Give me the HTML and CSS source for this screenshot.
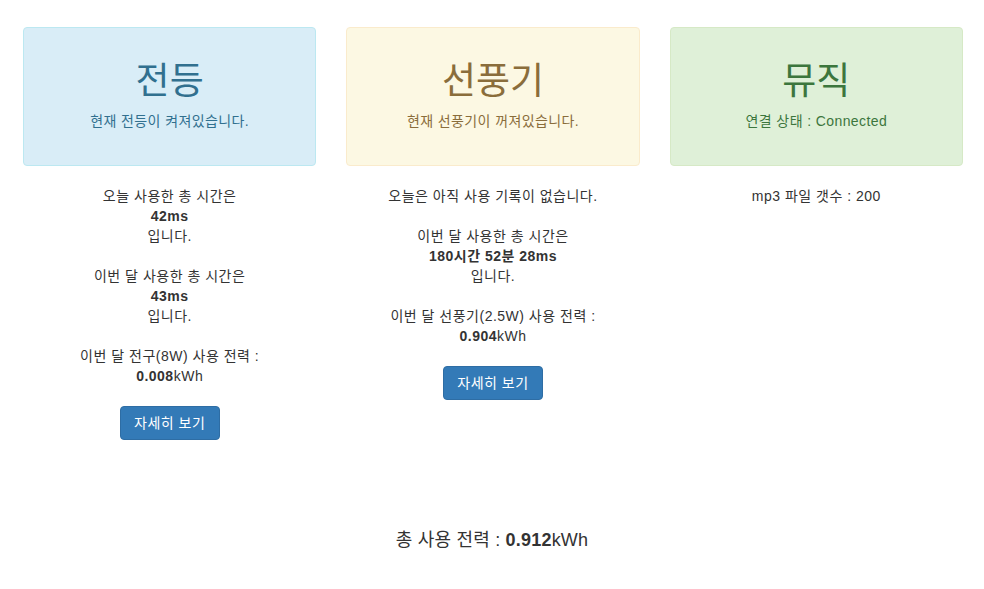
FILE: index.html
```html
<!DOCTYPE html>
<html lang="ko">
<head>
<meta charset="utf-8">
<title>Home</title>
<link rel="stylesheet" href="styles.css">
</head>
<body>
<div class="grid">
  <div class="col">
    <div class="alert alert-info">
      <h1 class="title">전등</h1>
      <p class="sub">현재 전등이 켜져있습니다.</p>
    </div>
    <div class="info">
      오늘 사용한 총 시간은<br><b>42ms</b><br>입니다.<br><br>
      이번 달 사용한 총 시간은<br><b>43ms</b><br>입니다.<br><br>
      이번 달 전구(8W) 사용 전력 :<br><b>0.008</b>kWh
    </div>
    <button class="btn">자세히 보기</button>
  </div>
  <div class="col">
    <div class="alert alert-warning">
      <h1 class="title">선풍기</h1>
      <p class="sub">현재 선풍기이 꺼져있습니다.</p>
    </div>
    <div class="info">
      오늘은 아직 사용 기록이 없습니다.<br><br>
      이번 달 사용한 총 시간은<br><b>180시간 52분 28ms</b><br>입니다.<br><br>
      이번 달 선풍기(2.5W) 사용 전력 :<br><b>0.904</b>kWh
    </div>
    <button class="btn">자세히 보기</button>
  </div>
  <div class="col">
    <div class="alert alert-success">
      <h1 class="title">뮤직</h1>
      <p class="sub">연결 상태 : Connected</p>
    </div>
    <div class="info">mp3 파일 갯수 : 200</div>
  </div>
</div>
<div class="total">총 사용 전력 : <b>0.912</b>kWh</div>
</body>
</html>
```
FILE: styles.css
```css
html, body {
  margin: 0;
  padding: 0;
  background: #fff;
}
body {
  font-family: "Liberation Sans", "Noto Sans CJK KR", sans-serif;
  font-size: 14px;
  line-height: 20px;
  color: #333;
}
.grid {
  width: 940px;
  margin-left: 23px;
  padding-top: 27px;
  display: grid;
  grid-template-columns: repeat(3, 1fr);
  column-gap: 30px;
}
.col {
  display: flex;
  flex-direction: column;
  align-items: center;
  text-align: center;
}
.alert {
  box-sizing: border-box;
  width: 100%;
  height: 139px;
  border: 1px solid transparent;
  border-radius: 4px;
  padding: 30px 15px 15px;
}
.alert-info {
  background: #d9edf7;
  border-color: #bce8f1;
  color: #31708f;
}
.alert-warning {
  background: #fcf8e3;
  border-color: #faebcc;
  color: #8a6d3b;
}
.alert-success {
  background: #dff0d8;
  border-color: #d6e9c6;
  color: #3c763d;
}
.title {
  margin: 0;
  font-size: 37px;
  font-weight: 400;
  line-height: 48px;
}
.sub {
  margin: 5px 0 0;
  font-size: 14px;
  line-height: 20px;
  letter-spacing: 0.4px;
}
.info {
  margin-top: 20px;
  letter-spacing: 0.5px;
}
.btn {
  margin-top: 20px;
  font-family: inherit;
  font-size: 14px;
  line-height: 20px;
  padding: 6px 12px;
  color: #fff;
  background: #337ab7;
  border: 1px solid #2e6da4;
  border-radius: 4px;
  width: 100px;
  height: 34px;
  letter-spacing: 0.5px;
}
.total {
  text-align: center;
  font-size: 18px;
  line-height: 24px;
  margin-top: 88px;
  letter-spacing: 0.2px;
}
```
